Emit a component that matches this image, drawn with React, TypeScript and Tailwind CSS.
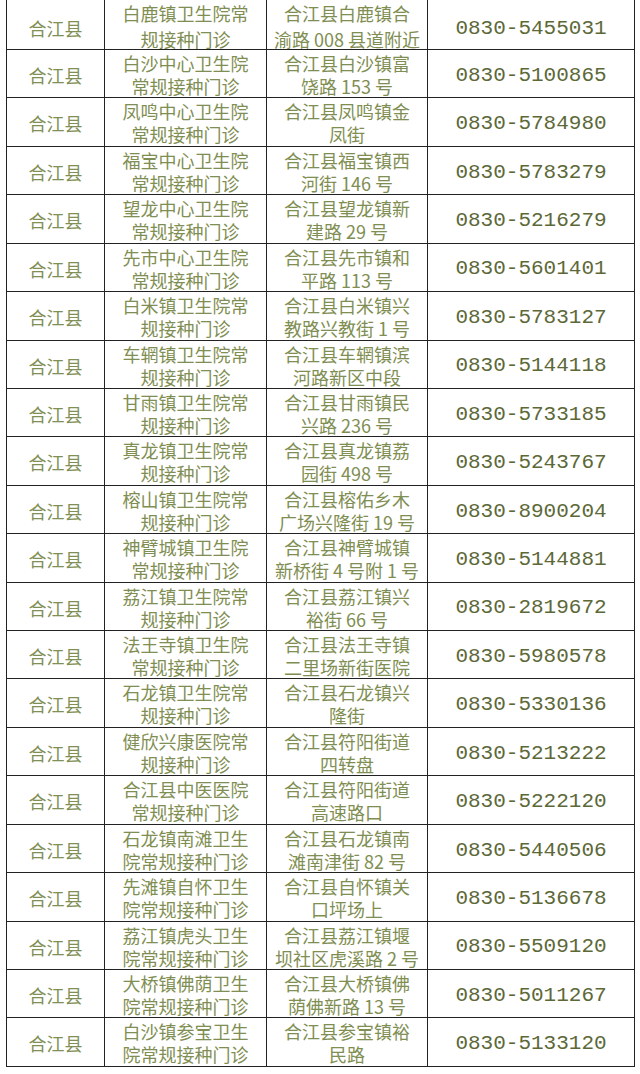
import React from 'react';

type Row = {
  county: string;
  name: [string, string];
  addr: [string, string];
  phone: string;
};

const ROWS: Row[] = [
  { county: '合江县', name: ['白鹿镇卫生院常', '规接种门诊'], addr: ['合江县白鹿镇合', '渝路 008 县道附近'], phone: '0830-5455031' },
  { county: '合江县', name: ['白沙中心卫生院', '常规接种门诊'], addr: ['合江县白沙镇富', '饶路 153 号'], phone: '0830-5100865' },
  { county: '合江县', name: ['凤鸣中心卫生院', '常规接种门诊'], addr: ['合江县凤鸣镇金', '凤街'], phone: '0830-5784980' },
  { county: '合江县', name: ['福宝中心卫生院', '常规接种门诊'], addr: ['合江县福宝镇西', '河街 146 号'], phone: '0830-5783279' },
  { county: '合江县', name: ['望龙中心卫生院', '常规接种门诊'], addr: ['合江县望龙镇新', '建路 29 号'], phone: '0830-5216279' },
  { county: '合江县', name: ['先市中心卫生院', '常规接种门诊'], addr: ['合江县先市镇和', '平路 113 号'], phone: '0830-5601401' },
  { county: '合江县', name: ['白米镇卫生院常', '规接种门诊'], addr: ['合江县白米镇兴', '教路兴教街 1 号'], phone: '0830-5783127' },
  { county: '合江县', name: ['车辋镇卫生院常', '规接种门诊'], addr: ['合江县车辋镇滨', '河路新区中段'], phone: '0830-5144118' },
  { county: '合江县', name: ['甘雨镇卫生院常', '规接种门诊'], addr: ['合江县甘雨镇民', '兴路 236 号'], phone: '0830-5733185' },
  { county: '合江县', name: ['真龙镇卫生院常', '规接种门诊'], addr: ['合江县真龙镇荔', '园街 498 号'], phone: '0830-5243767' },
  { county: '合江县', name: ['榕山镇卫生院常', '规接种门诊'], addr: ['合江县榕佑乡木', '广场兴隆街 19 号'], phone: '0830-8900204' },
  { county: '合江县', name: ['神臂城镇卫生院', '常规接种门诊'], addr: ['合江县神臂城镇', '新桥街 4 号附 1 号'], phone: '0830-5144881' },
  { county: '合江县', name: ['荔江镇卫生院常', '规接种门诊'], addr: ['合江县荔江镇兴', '裕街 66 号'], phone: '0830-2819672' },
  { county: '合江县', name: ['法王寺镇卫生院', '常规接种门诊'], addr: ['合江县法王寺镇', '二里场新街医院'], phone: '0830-5980578' },
  { county: '合江县', name: ['石龙镇卫生院常', '规接种门诊'], addr: ['合江县石龙镇兴', '隆街'], phone: '0830-5330136' },
  { county: '合江县', name: ['健欣兴康医院常', '规接种门诊'], addr: ['合江县符阳街道', '四转盘'], phone: '0830-5213222' },
  { county: '合江县', name: ['合江县中医医院', '常规接种门诊'], addr: ['合江县符阳街道', '高速路口'], phone: '0830-5222120' },
  { county: '合江县', name: ['石龙镇南滩卫生', '院常规接种门诊'], addr: ['合江县石龙镇南', '滩南津街 82 号'], phone: '0830-5440506' },
  { county: '合江县', name: ['先滩镇自怀卫生', '院常规接种门诊'], addr: ['合江县自怀镇关', '口坪场上'], phone: '0830-5136678' },
  { county: '合江县', name: ['荔江镇虎头卫生', '院常规接种门诊'], addr: ['合江县荔江镇堰', '坝社区虎溪路 2 号'], phone: '0830-5509120' },
  { county: '合江县', name: ['大桥镇佛荫卫生', '院常规接种门诊'], addr: ['合江县大桥镇佛', '荫佛新路 13 号'], phone: '0830-5011267' },
  { county: '合江县', name: ['白沙镇参宝卫生', '院常规接种门诊'], addr: ['合江县参宝镇裕', '民路'], phone: '0830-5133120' },
];

// two-line cell text; the first row sits a bit looser (top of table is cut off)
const TwoLines: React.FC<{ lines: [string, string]; first?: boolean }> = ({ lines, first }) => (
  <div
    className={`flex flex-col items-center text-[18px] text-[#7f8e52] whitespace-nowrap ${
      first ? 'leading-[26px]' : 'leading-[23px] pt-[2px]'
    }`}
  >
    <span>{lines[0]}</span>
    <span>{lines[1]}</span>
  </div>
);

const App: React.FC = () => {
  return (
    <div className="w-[640px] h-[1074px] bg-white overflow-hidden font-['Noto_Sans_CJK_SC',sans-serif]">
      <div className="ml-[6px] w-[629px] border-x border-[#222]">
        {ROWS.map((row, i) => (
          <div
            key={i}
            className={`grid grid-cols-[98px_162px_161px_1fr] border-b border-[#222] ${
              i === 0 ? 'h-[50px]' : 'h-[48.43px]'
            }`}
          >
            {/* county */}
            <div
              className={`flex items-center justify-center border-r border-[#222] text-[18px] text-[#808f55] ${
                i === 0 ? 'pt-[5px]' : 'pt-[3px]'
              }`}
            >
              {row.county}
            </div>
            {/* clinic name */}
            <div className="border-r border-[#222] flex items-center justify-center">
              <TwoLines lines={row.name} first={i === 0} />
            </div>
            {/* address */}
            <div className="border-r border-[#222] flex items-center justify-center">
              <TwoLines lines={row.addr} first={i === 0} />
            </div>
            {/* phone */}
            <div
              className={`flex items-center justify-center font-['Liberation_Mono',monospace] text-[21px] text-[#5d6838] ${
                i === 0 ? 'pt-[5px]' : 'pt-[3px]'
              }`}
            >
              {row.phone}
            </div>
          </div>
        ))}
      </div>
    </div>
  );
};

export default App;
